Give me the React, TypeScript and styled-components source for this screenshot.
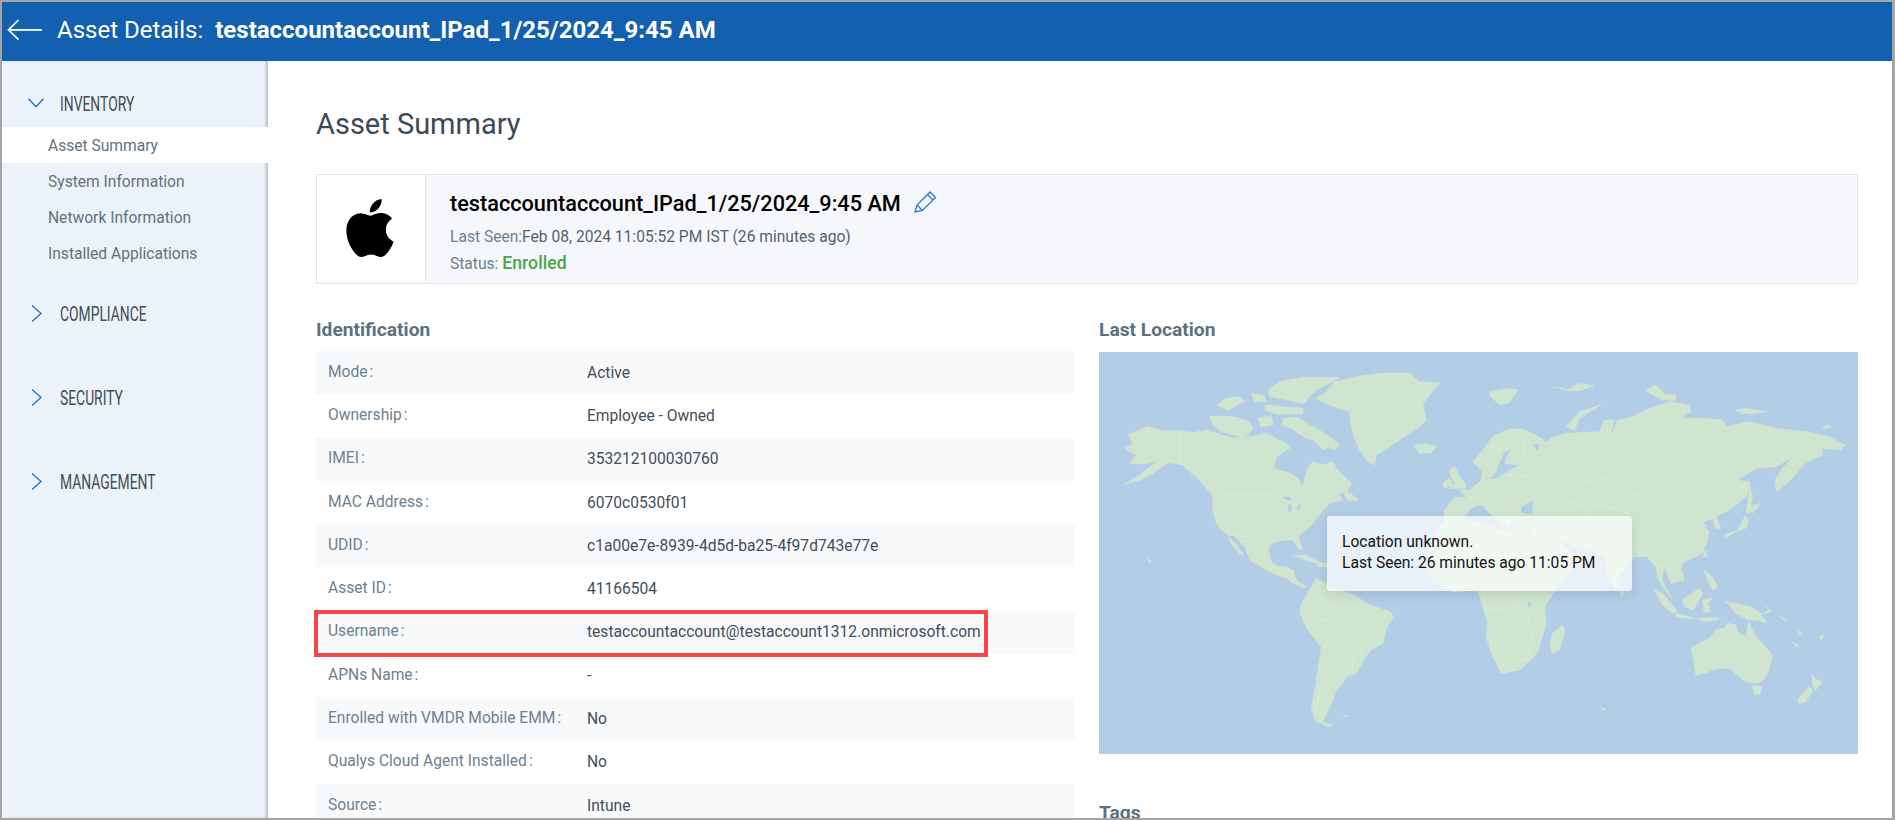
import styled, { createGlobalStyle } from 'styled-components';
import { SiApple } from 'react-icons/si';

const GlobalStyle = createGlobalStyle`
  html, body {
    margin: 0;
    padding: 0;
    background: #fff;
    font-family: Roboto, "Liberation Sans", sans-serif;
  }
`;

const Frame = styled.div`
  width: 1895px;
  height: 820px;
  box-sizing: border-box;
  border: solid #a6a6a6;
  border-width: 2px 3px 2px 2px;
  display: flex;
  flex-direction: column;
  overflow: hidden;
`;

const Header = styled.header`
  height: 59px;
  flex: none;
  background: #1460b0;
  color: #fff;
  display: flex;
  align-items: center;
  padding: 0 0 3px 5px;
  box-sizing: border-box;
  font-size: 24px;
`;

const BackIcon = styled.svg`
  width: 36px;
  height: 22px;
  margin-right: 14px;
`;

const HeaderName = styled.b`
  font-weight: 700;
  margin-left: 12px;
`;

const Body = styled.div`
  flex: 1;
  display: flex;
  min-height: 0;
`;

const Sidebar = styled.nav`
  width: 266px;
  flex: none;
  padding-top: 24px;
  background: #ecf2fa;
  box-shadow: inset -3px 0 3px -1px #b4bcc4;
`;

const Section = styled.section<{ $open?: boolean }>`
  margin-bottom: ${({ $open }) => ($open ? 24 : 48)}px;
`;

const SectionHead = styled.div`
  height: 36px;
  display: flex;
  align-items: center;
  padding-left: 26px;
`;

const ChevronSlot = styled.span`
  width: 32px;
  display: flex;
  align-items: center;
`;

const SectionTitle = styled.span`
  display: inline-block;
  margin-top: 1px;
  font-size: 21px;
  color: #3f4d57;
  transform: scaleX(0.66);
  transform-origin: left center;
  white-space: nowrap;
`;

const NavList = styled.div`
  margin-top: 6px;
`;

const NavItem = styled.div<{ $active?: boolean }>`
  height: 36px;
  line-height: 38px;
  padding-left: 46px;
  font-size: 15.6px;
  color: #5f7382;
  background: ${({ $active }) => ($active ? '#fff' : 'transparent')};
`;

const Main = styled.main`
  flex: 1;
  min-width: 0;
  padding: 45px 34px 0 48px;
  overflow: hidden;
`;

const PageTitle = styled.h1`
  margin: 0;
  font-size: 29px;
  line-height: 36px;
  font-weight: 400;
  color: #3d4a55;
`;

const AssetCard = styled.div`
  margin-top: 32px;
  height: 110px;
  box-sizing: border-box;
  border: 1px solid #dfe5ec;
  display: flex;
  background: #f5f7fa;
`;

const LogoCell = styled.div`
  width: 109px;
  flex: none;
  box-sizing: border-box;
  padding: 0 3px 3px 0;
  background: #fff;
  border-right: 1px solid #dfe5ec;
  display: flex;
  align-items: center;
  justify-content: center;
  font-size: 58px;
  color: #000;
`;

const AssetInfo = styled.div`
  padding: 14px 0 0 24px;
`;

const AssetName = styled.div`
  display: flex;
  align-items: center;
  margin-bottom: 5px;
  font-size: 21.7px;
  line-height: 30px;
  font-weight: 500;
  color: #000;
`;

const PencilIcon = styled.svg`
  width: 24px;
  height: 24px;
  margin-left: 12px;
  margin-top: -4px;
`;

const Meta = styled.div`
  font-size: 15.6px;
  line-height: 26px;
  color: #53626e;
`;

const MetaLabel = styled.span`
  color: #6d8190;
`;

const Enrolled = styled.span`
  font-size: 17.7px;
  font-weight: 500;
  color: #4ca44c;
`;

const Columns = styled.div`
  margin-top: 34px;
  display: grid;
  grid-template-columns: 759px 759px;
  column-gap: 24px;
`;

const SectionHeading = styled.h2<{ $gap?: number }>`
  margin: 0 0 ${({ $gap }) => $gap ?? 9}px;
  font-size: 19.2px;
  line-height: 24px;
  font-weight: 700;
  color: #5c7080;
`;

const Row = styled.div<{ $shaded: boolean }>`
  position: relative;
  height: 43.3px;
  display: flex;
  align-items: center;
  padding-left: 12px;
  font-size: 15.6px;
  background: ${({ $shaded }) => ($shaded ? '#f8f9fb' : '#fff')};
`;

const RowLabel = styled.div`
  width: 259px;
  flex: none;
  margin-top: -2px;
  color: #6d8190;
`;

const Colon = styled.span`
  margin-left: 2px;
`;

const RowValue = styled.div`
  color: #434e58;
`;

const RedBox = styled.div`
  position: absolute;
  z-index: 1;
  left: -2px;
  top: -1px;
  width: 674px;
  height: 47px;
  box-sizing: border-box;
  border: 4px solid #f7434a;
`;

const MapBox = styled.div`
  position: relative;
  height: 402px;
  background: #b3cde7;
`;

const MapSvg = styled.svg`
  display: block;
  width: 100%;
  height: 100%;
`;

const MapPopup = styled.div`
  position: absolute;
  left: 228px;
  top: 164px;
  width: 305px;
  height: 75px;
  box-sizing: border-box;
  padding: 16px 15px;
  border-radius: 3px;
  background: rgba(255, 255, 255, 0.7);
  box-shadow: 0 4px 12px rgba(0, 0, 0, 0.1);
  font-size: 15.6px;
  line-height: 21px;
  color: #111;
`;

const TagsHeading = styled(SectionHeading)`
  margin-top: 47px;
`;

const rows = [
  ['Mode', 'Active'],
  ['Ownership', 'Employee - Owned'],
  ['IMEI', '353212100030760'],
  ['MAC Address', '6070c0530f01'],
  ['UDID', 'c1a00e7e-8939-4d5d-ba25-4f97d743e77e'],
  ['Asset ID', '41166504'],
  ['Username', 'testaccountaccount@testaccount1312.onmicrosoft.com'],
  ['APNs Name', '-'],
  ['Enrolled with VMDR Mobile EMM', 'No'],
  ['Qualys Cloud Agent Installed', 'No'],
  ['Source', 'Intune'],
];

// each group is traced in its own crop space, the transform drops it on the 760x402 map
const LAND = '#d0e5cf';
const LINE = '#dcedc9';
const SEA = '#b3cde7';

const mapGroups = [
  {
    t: 'translate(-9 -12) scale(0.3333)',
    land: [
      '115,285 145,270 175,260 220,272 270,272 310,278 350,270 395,285 430,295 455,288 480,290 530,280 565,300 590,310 600,325 575,340 560,350 552,380 570,392 590,395 610,405 625,415 640,440 645,415 650,395 660,375 670,365 700,375 730,365 740,385 755,400 785,430 770,455 745,462 760,480 720,490 705,505 700,510 685,530 670,550 655,565 640,575 625,590 638,630 625,625 610,600 585,600 560,605 540,612 535,630 545,665 565,680 585,680 610,690 615,710 625,725 650,740 640,745 620,735 590,715 560,705 530,690 480,660 465,620 430,585 415,585 395,570 380,550 368,510 370,470 345,440 325,415 310,400 280,375 235,368 210,385 190,400 150,420 105,432 150,405 180,380 200,365 160,372 120,370 140,345 105,325 130,310',
      '418,590 440,615 462,645 448,640 425,612',
      '580,235 620,232 650,250 680,265 720,290 750,315 735,330 715,320 700,330 670,300 640,290 605,265 575,255',
      '405,228 440,232 478,245 490,268 465,290 430,285 395,275 370,255 360,230',
      '380,195 410,175 450,170 465,185 440,195 415,212',
      '535,150 570,125 640,112 750,112 720,130 680,150 660,170 645,190 610,185 570,175 540,170',
      '485,160 525,168 530,185 495,185',
      '530,195 580,200 640,205 640,222 560,222 525,210',
      '505,235 545,228 550,255 512,262',
      '680,175 705,160 735,125 800,110 870,100 960,100 990,125 1050,128 1025,160 1000,190 1010,240 985,265 945,290 900,320 860,345 855,375 835,365 810,330 795,295 785,260 780,215 720,195',
      '975,315 1010,312 1040,320 1025,338 990,340',
      '770,450 800,475 805,483 775,480 765,465',
      '610,645 650,645 695,670 660,665',
      '680,668 715,670 710,680 685,680',
      '170,655 185,665 180,670',
    ],
    water: ['580,470 600,470 605,480 585,480', '595,495 605,490 605,515 595,515', '620,490 640,495 625,510'],
    lines: ['270,272 272,365 320,420', '370,462 570,468 600,490 650,500 700,480', '415,585 480,590 530,630', '560,685 590,700'],
  },
  {
    t: 'translate(101 148) scale(0.3333)',
    land: [
      '305,310 350,235 400,265 465,285 500,310 570,335 582,350 560,385 550,430 515,450 498,470 470,520 440,530 425,555 410,570 400,600 370,665 400,675 385,680 345,660 335,620 345,570 355,510 365,440 320,385 300,335',
      '430,645 445,645 440,652',
      '735,60 690,130 680,200 700,245 760,275 835,270 850,320 865,365 860,410 880,470 905,520 960,510 1010,465 1030,410 1040,370 1035,320 1090,240 1105,215 1050,225 1030,190 1000,130 985,95 900,90 845,70 800,60',
      '1090,375 1098,390 1080,450 1058,460 1052,430 1060,400',
      '1205,625 1218,625 1212,632',
    ],
    water: ['985,310 995,305 995,320 986,320'],
    lines: [
      '350,355 400,365 430,400 500,430 465,470 455,520',
      '365,440 420,435 465,470',
      '395,520 360,560 350,640',
      '400,265 400,365',
      '860,330 960,320 985,345 1000,420 1020,450',
      '865,410 915,475 980,480 1000,420',
      '915,475 905,520',
      '800,60 860,330',
      '900,90 960,320',
      '690,130 850,230 1050,225',
    ],
  },
  {
    t: 'translate(341 68) scale(0.3333)',
    land: [
      '45,232 80,232 60,210 90,210 110,195 125,180 128,155 140,160 140,178 165,178 205,155 240,135 195,130 208,100 222,80 192,100 178,130 172,150 150,178 135,160 100,125 130,90 160,50 205,28 250,28 300,50 322,68 280,72 290,92 330,65 400,40 400,350 285,330 230,335 215,315 205,335 190,295 165,262 200,310 185,320 130,255 105,258 85,275 70,300 45,325 15,320 15,270',
      '30,150 45,140 60,170 80,195 75,205 30,205 45,190 35,170',
      '10,190 30,175 40,195 15,205',
    ],
    water: [
      '245,262 262,250 290,240 300,255 320,270 318,283 270,282 245,278',
      '360,250 380,240 390,255 385,275 395,290 400,310 385,315 370,290',
    ],
    lines: [
      '125,185 160,220 240,210 285,215',
      '90,230 140,245 210,240 245,230',
      '160,70 145,120',
      '250,40 255,100 235,130',
      '205,165 265,170 285,210 360,215',
      '110,195 120,240',
      '160,220 150,250',
      '240,210 215,275',
      '330,300 410,330 450,300',
    ],
  },
  {
    t: 'translate(391 -12) scale(0.3333)',
    land: [
      '150,310 170,310 185,295 230,280 330,275 345,240 375,240 360,300 385,240 420,235 470,210 540,185 600,195 605,215 575,235 640,235 700,240 710,260 780,245 860,265 950,275 1020,290 1070,315 1055,330 1000,325 1000,345 945,372 905,420 862,455 858,420 880,385 912,352 860,380 800,385 745,420 778,425 775,465 730,505 680,530 695,565 680,565 670,535 640,545 660,575 655,600 640,640 585,665 575,680 585,720 545,730 525,680 518,720 550,780 535,760 505,715 500,680 475,650 435,650 395,700 380,750 350,690 345,645 270,625 215,600 240,640 290,660 225,705 190,730 130,610 125,585 135,570 130,500',
      '190,140 235,150 270,130 315,137 270,152 240,152',
      '0,155 60,145 85,150 60,188 30,195 0,165',
      '230,260 270,215 335,195 320,205 270,235 255,270',
      '470,150 500,135 530,165 560,165 560,180 520,180 490,165',
      '740,210 770,205 830,215 800,220 760,220',
      '1000,260 1020,255 1025,263 1005,265',
      '780,425 790,470 780,520 772,515 778,470',
      '775,500 815,490 790,520',
      '705,585 745,570 770,525 778,545 770,565 740,575 712,592',
      '650,630 655,650 640,650',
      '395,750 405,760 395,770',
    ],
    lines: [
      '205,470 280,425 350,415 440,465 520,440 570,465 640,430 690,430 740,470 775,425',
      '450,465 550,515 640,480 600,455',
      '205,470 230,485 290,500 350,500 420,520',
      '290,500 320,640',
      '430,640 470,610 540,640 580,660',
      '475,650 500,680 560,690',
      '640,545 680,530',
      '90,560 215,600',
    ],
  },
  {
    t: 'translate(531 218) scale(0.3333)',
    land: [
      '75,60 100,70 145,125 130,130 100,105',
      '160,90 210,55 220,70 205,100 190,120 165,110',
      '140,130 195,145 195,148 140,140',
      '200,145 270,142 265,150 225,155',
      '220,90 250,85 235,100 245,125 225,128',
      '225,0 250,20 265,50 250,60 235,30',
      '290,95 340,105 365,110 390,125 412,158 385,150 360,150 320,130',
      '405,105 425,125 400,132 420,120',
      '448,138 470,148 473,155',
      '508,180 518,195 510,195',
      '490,215 510,230 505,232',
      '570,200 585,195 578,210',
      '185,235 240,205 262,178 285,175 295,160 320,165 325,185 350,200 358,155 380,200 405,225 430,255 420,300 405,330 380,340 350,335 325,315 300,295 265,295 225,310 200,315 195,280',
      '370,348 398,350 392,373 378,373',
      '548,315 565,330 580,335 560,360 550,345',
      '540,352 552,360 530,395 510,400 505,390',
    ],
    lines: ['352,108 352,148'],
  },
];

const WorldMap = () => (
  <MapSvg viewBox="0 0 760 402" preserveAspectRatio="none">
    {mapGroups.map((group) => (
      <g key={group.t} transform={group.t}>
        {group.land.map((points) => (
          <polygon key={points} points={points} fill={LAND} stroke={LAND} strokeWidth={2} strokeLinejoin="round" />
        ))}
        {group.water?.map((points) => (
          <polygon key={points} points={points} fill={SEA} />
        ))}
        {group.lines?.map((points) => (
          <polyline key={points} points={points} fill="none" stroke={LINE} strokeWidth={2.4} />
        ))}
      </g>
    ))}
  </MapSvg>
);

const ChevronDown = () => (
  <svg width="16" height="10" viewBox="0 0 16 10">
    <path d="M0.5 0.8 L8 8.8 L15.5 0.8" fill="none" stroke="#1f6fc8" strokeWidth="1.3" />
  </svg>
);

const ChevronRight = () => (
  <svg width="11" height="17" viewBox="0 0 11 17" style={{ marginLeft: 3 }}>
    <path d="M1 0.6 L10 8.5 L1 16.4" fill="none" stroke="#1f6fc8" strokeWidth="1.3" />
  </svg>
);

export default function App() {
  return (
    <>
      <GlobalStyle />
      <Frame>
        <Header>
          <BackIcon viewBox="0 0 36 22">
            <path d="M35 10.8 H2 M11.5 1 L1.5 10.8 L11.5 20.6" fill="none" stroke="#fff" strokeWidth="1.7" />
          </BackIcon>
          Asset Details:
          <HeaderName>testaccountaccount_IPad_1/25/2024_9:45 AM</HeaderName>
        </Header>
        <Body>
          <Sidebar>
            <Section $open>
              <SectionHead>
                <ChevronSlot>
                  <ChevronDown />
                </ChevronSlot>
                <SectionTitle>INVENTORY</SectionTitle>
              </SectionHead>
              <NavList>
                <NavItem $active>Asset Summary</NavItem>
                <NavItem>System Information</NavItem>
                <NavItem>Network Information</NavItem>
                <NavItem>Installed Applications</NavItem>
              </NavList>
            </Section>
            {['COMPLIANCE', 'SECURITY', 'MANAGEMENT'].map((title) => (
              <Section key={title}>
                <SectionHead>
                  <ChevronSlot>
                    <ChevronRight />
                  </ChevronSlot>
                  <SectionTitle>{title}</SectionTitle>
                </SectionHead>
              </Section>
            ))}
          </Sidebar>
          <Main>
            <PageTitle>Asset Summary</PageTitle>
            <AssetCard>
              <LogoCell>
                <SiApple />
              </LogoCell>
              <AssetInfo>
                <AssetName>
                  testaccountaccount_IPad_1/25/2024_9:45 AM
                  <PencilIcon viewBox="0 0 24 24">
                    <path
                      d="M2 22 L4 15 L17 2 L22.5 7.5 L9.5 20.5 Z M14.5 4.5 L20 10 M4 15 L9.5 20.5"
                      fill="none"
                      stroke="#2f73c8"
                      strokeWidth="1.3"
                    />
                  </PencilIcon>
                </AssetName>
                <Meta>
                  <MetaLabel>Last Seen:</MetaLabel>Feb 08, 2024 11:05:52 PM IST (26 minutes ago)
                </Meta>
                <Meta>
                  <MetaLabel>Status: </MetaLabel>
                  <Enrolled>Enrolled</Enrolled>
                </Meta>
              </AssetInfo>
            </AssetCard>
            <Columns>
              <div>
                <SectionHeading>Identification</SectionHeading>
                {rows.map(([label, value], i) => (
                  <Row key={label} $shaded={i % 2 === 0}>
                    <RowLabel>
                      {label}
                      <Colon>:</Colon>
                    </RowLabel>
                    <RowValue>{value}</RowValue>
                    {label === 'Username' && <RedBox />}
                  </Row>
                ))}
              </div>
              <div>
                <SectionHeading $gap={10}>Last Location</SectionHeading>
                <MapBox>
                  <WorldMap />
                  <MapPopup>
                    Location unknown.
                    <br />
                    Last Seen: 26 minutes ago 11:05 PM
                  </MapPopup>
                </MapBox>
                <TagsHeading>Tags</TagsHeading>
              </div>
            </Columns>
          </Main>
        </Body>
      </Frame>
    </>
  );
}
